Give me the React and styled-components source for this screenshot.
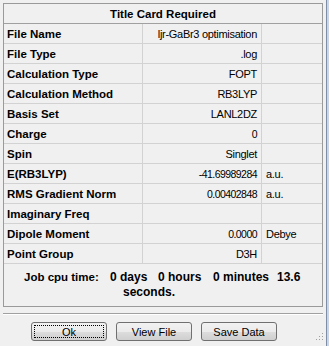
import styled, { createGlobalStyle } from 'styled-components';

const GlobalStyle = createGlobalStyle`
  html, body {
    margin: 0;
    padding: 0;
    background: #f0f0f0;
  }
  body {
    font-family: 'Liberation Sans', Arial, sans-serif;
    color: #000;
  }
`;

const Window = styled.div`
  width: 329px;
  height: 346px;
  box-sizing: border-box;
  position: relative;
  display: flex;
  flex-direction: column;
  padding: 3px 0 0 3px;
  box-shadow: inset -2px 0 0 #c9d6e6, inset -3px 0 0 #7d8ea6;
  overflow: hidden;
`;

const Panel = styled.div`
  width: 320px;
  box-sizing: border-box;
  border: 1px solid #9a9a9a;
  display: flex;
  flex-direction: column;
`;

const Header = styled.div`
  height: 19px;
  border-bottom: 1px solid #a0a0a0;
  display: flex;
  align-items: center;
  justify-content: center;
  font-size: 11.5px;
  font-weight: bold;
`;

const Row = styled.div`
  display: grid;
  grid-template-columns: 139px 119px 1fr;
  height: 20px;
  box-sizing: border-box;
  border-bottom: 1px solid #d2d2d2;
`;

const Cell = styled.div`
  display: flex;
  align-items: center;
  box-sizing: border-box;
  padding: 0 ${({ $right }) => ($right ? '4px' : '0')} 0 ${({ $pad }) => $pad || 3}px;
  justify-content: ${({ $right }) => ($right ? 'flex-end' : 'flex-start')};
  border-right: ${({ $last }) => ($last ? 'none' : '1px solid #d2d2d2')};
  font-size: ${({ $bold, $num }) => ($bold ? '11.5px' : $num ? '10.5px' : '11px')};
  font-weight: ${({ $bold }) => ($bold ? 'bold' : 'normal')};
  letter-spacing: ${({ $bold, $num }) => ($bold ? '0' : $num ? '-0.55px' : '-0.3px')};
  white-space: nowrap;
`;

const JobArea = styled.div`
  height: 42px;
  display: flex;
  padding: 7px 0 0 20px;
  box-sizing: border-box;
  font-weight: bold;
`;

const JobLabel = styled.div`
  width: 86px;
  font-size: 11.5px;
`;

const JobValue = styled.div`
  font-size: 12px;
  line-height: 15px;
  margin-top: -1px;
`;

const Part = styled.span`
  display: inline-block;
  width: ${({ $w }) => $w}px;
`;

const Indent = styled.span`
  padding-left: 13px;
`;

const Separator = styled.div`
  margin-top: 6px;
  width: 320px;
  height: 0;
  border-top: 1px solid #a0a0a0;
  border-bottom: 1px solid #ffffff;
`;

const ButtonRow = styled.div`
  display: flex;
  gap: 9px;
  padding: 7px 0 0 28px;
`;

const Button = styled.button`
  width: 76px;
  height: 19px;
  box-sizing: border-box;
  border: 1px solid #707070;
  border-radius: 3px;
  background: linear-gradient(#f2f2f2 0%, #ebebeb 50%, #dddddd 51%, #cfcfcf 100%);
  font-family: 'Liberation Sans', Arial, sans-serif;
  font-size: 11px;
  color: #000;
  padding: 0;
  position: relative;
  display: flex;
  align-items: center;
  justify-content: center;
`;

const Focus = styled.span`
  position: absolute;
  inset: 2px;
  border: 1px dotted #000;
`;

const Grip = styled.svg`
  position: absolute;
  right: 5px;
  bottom: 5px;
`;

const rows = [
  ['File Name', 'ljr-GaBr3 optimisation', ''],
  ['File Type', '.log', ''],
  ['Calculation Type', 'FOPT', ''],
  ['Calculation Method', 'RB3LYP', ''],
  ['Basis Set', 'LANL2DZ', ''],
  ['Charge', '0', ''],
  ['Spin', 'Singlet', ''],
  ['E(RB3LYP)', '-41.69989284', 'a.u.'],
  ['RMS Gradient Norm', '0.00402848', 'a.u.'],
  ['Imaginary Freq', '', ''],
  ['Dipole Moment', '0.0000', 'Debye'],
  ['Point Group', 'D3H', ''],
];

const isNumber = (v) => /^-?[\d.]+$/.test(v);

function App() {
  return (
    <>
      <GlobalStyle />
      <Window>
        <Panel>
          <Header>Title Card Required</Header>
          {rows.map(([label, value, unit]) => (
            <Row key={label}>
              <Cell $bold>{label}</Cell>
              <Cell $right $num={isNumber(value)}>
                {value}
              </Cell>
              <Cell $last $pad={4}>
                {unit}
              </Cell>
            </Row>
          ))}
          <JobArea>
            <JobLabel>Job cpu time:</JobLabel>
            <JobValue>
              <Part $w={48}>0 days</Part>
              <Part $w={55}>0 hours</Part>
              <Part $w={64}>0 minutes</Part>
              13.6
              <br />
              <Indent>seconds.</Indent>
            </JobValue>
          </JobArea>
        </Panel>
        <Separator />
        <ButtonRow>
          <Button>
            Ok
            <Focus />
          </Button>
          <Button>View File</Button>
          <Button>Save Data</Button>
        </ButtonRow>
        <Grip width="10" height="10" viewBox="0 0 10 10">
          {[
            [8, 2],
            [8, 5],
            [5, 5],
            [8, 8],
            [5, 8],
            [2, 8],
          ].map(([x, y]) => (
            <rect key={`${x}-${y}`} x={x} y={y} width="1" height="1" fill="#a0a0a0" />
          ))}
        </Grip>
      </Window>
    </>
  );
}

export default App;
